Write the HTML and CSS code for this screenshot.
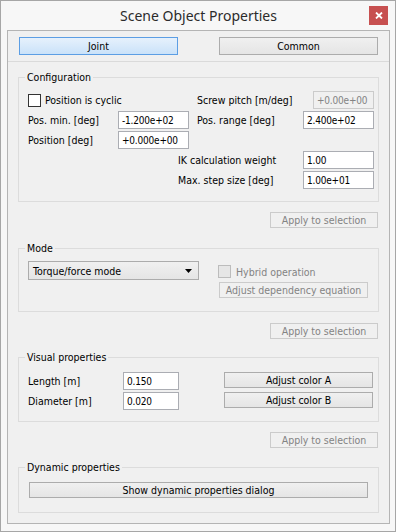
FILE: index.html
```html
<!DOCTYPE html>
<html lang="en">
<head>
    <meta charset="UTF-8">
    <title>Scene Object Properties</title>
    <link rel="stylesheet" href="styles.css">
</head>
<body>
    <div class="window">
        <div class="titlebar">
            <span class="title">Scene Object Properties</span>
            <span class="close">
                <svg width="8" height="7" viewBox="0 0 8 7"><path d="M1 0.5 L7 6.5 M7 0.5 L1 6.5" stroke="#fff" stroke-width="1.8"/></svg>
            </span>
        </div>

        <div class="client">
            <div class="tabs">
                <button class="btn tab active">Joint</button>
                <button class="btn tab">Common</button>
            </div>

            <div class="page">
                <fieldset class="group config">
                    <legend>Configuration</legend>
                    <div class="row first">
                        <span class="check"><span class="box"></span>Position is cyclic</span>
                        <span class="lbl-pitch">Screw pitch [m/deg]</span>
                        <input class="field w61" type="text" value="+0.00e+00" disabled>
                    </div>
                    <div class="row">
                        <span class="lbl-a">Pos. min. [deg]</span>
                        <input class="field w71" type="text" value="-1.200e+02">
                        <span class="lbl-b">Pos. range [deg]</span>
                        <input class="field w71" type="text" value="2.400e+02">
                    </div>
                    <div class="row">
                        <span class="lbl-a">Position [deg]</span>
                        <input class="field w71" type="text" value="+0.000e+00">
                    </div>
                    <div class="row">
                        <span class="lbl-ik">IK calculation weight</span>
                        <input class="field w71" type="text" value="1.00">
                    </div>
                    <div class="row">
                        <span class="lbl-ik">Max. step size [deg]</span>
                        <input class="field w71" type="text" value="1.00e+01">
                    </div>
                </fieldset>

                <div class="apply-row first-apply">
                    <button class="btn apply" disabled>Apply to selection</button>
                </div>

                <fieldset class="group mode">
                    <legend>Mode</legend>
                    <div class="mode-body">
                        <div class="combo">
                            <span>Torque/force mode</span>
                            <svg width="7" height="4" viewBox="0 0 7 4"><polygon points="0,0 7,0 3.5,4" fill="#000"/></svg>
                        </div>
                        <div class="mode-side">
                            <span class="check disabled"><span class="box"></span>Hybrid operation</span>
                            <button class="btn dep" disabled>Adjust dependency equation</button>
                        </div>
                    </div>
                </fieldset>

                <div class="apply-row second-apply">
                    <button class="btn apply" disabled>Apply to selection</button>
                </div>

                <fieldset class="group visual">
                    <legend>Visual properties</legend>
                    <div class="row first">
                        <span class="lbl-v">Length [m]</span>
                        <input class="field w56" type="text" value="0.150">
                        <button class="btn color">Adjust color A</button>
                    </div>
                    <div class="row">
                        <span class="lbl-v">Diameter [m]</span>
                        <input class="field w56" type="text" value="0.020">
                        <button class="btn color">Adjust color B</button>
                    </div>
                </fieldset>

                <div class="apply-row third-apply">
                    <button class="btn apply" disabled>Apply to selection</button>
                </div>

                <fieldset class="group dynamic">
                    <legend>Dynamic properties</legend>
                    <button class="btn wide">Show dynamic properties dialog</button>
                </fieldset>
            </div>
        </div>
    </div>
</body>
</html>
```

FILE: styles.css
```css
body {
    margin: 0;
    font-family: "DejaVu Sans Condensed", "Liberation Sans", sans-serif;
    font-size: 10.5px;
    color: #000;
    background-color: #fff;
}

.window {
    box-sizing: border-box;
    width: 396px;
    height: 532px;
    border: 1px solid #a6a6a6;
    background-color: #f7f7f7;
    padding: 0 5px 7px 6px;
    display: flex;
    flex-direction: column;
}

.titlebar {
    height: 29px;
    display: flex;
    align-items: center;
    justify-content: center;
    position: relative;
}

.title {
    font-family: "Noto Sans", sans-serif;
    font-size: 14px;
    color: #2b2b2b;
    margin-top: -1px;
}

.close {
    position: absolute;
    right: 2px;
    top: 5px;
    width: 19px;
    height: 19px;
    background-color: #c75050;
    display: flex;
    align-items: center;
    justify-content: center;
}

.client {
    flex: 1;
    border: 1px solid #b4b4b4;
    background-color: #f0f0f0;
}

.tabs {
    box-sizing: border-box;
    height: 31px;
    border-bottom: 1px solid #dadada;
    padding: 6px 11px 0 11px;
    display: flex;
    justify-content: space-between;
    align-items: flex-start;
}

.page {
    padding: 0 10px;
}

/* buttons */
.btn {
    box-sizing: border-box;
    font-family: inherit;
    font-size: 10.5px;
    color: #000;
    border: 1px solid #acacac;
    background: linear-gradient(#f0f0f0, #e5e5e5);
    padding: 0;
    margin: 0;
    height: 16px;
    line-height: 14px;
    border-radius: 0;
}

.btn:disabled {
    color: #838383;
    border-color: #cbcbcb;
    background: #f0f0f0;
}

.tab {
    width: 159px;
    height: 18px;
}

.tab.active {
    border-color: #5c9ee4;
    background: linear-gradient(#e6f1fc, #cae2f9);
}

.apply-row {
    display: flex;
    justify-content: flex-end;
    padding-right: 1px;
}

.apply {
    width: 108px;
}

.first-apply { margin-top: 10px; }
.second-apply { margin-top: 11px; }
.third-apply { margin-top: 10px; }

/* group boxes */
.group {
    margin: 0;
    border: 1px solid #dcdcdc;
    padding: 0 9px;
    min-width: 0;
}

.group legend {
    padding: 0 2px;
    margin-left: -3px;
    height: 15px;
    line-height: 15px;
}

.config {
    margin-top: 8px;
    padding-top: 6px;
    padding-bottom: 12px;
}

.mode {
    margin-top: 13px;
    padding-top: 5px;
    padding-bottom: 13px;
}

.visual {
    margin-top: 11px;
    padding-top: 7px;
    padding-bottom: 11px;
}

.dynamic {
    margin-top: 12px;
    padding-top: 7px;
    padding-bottom: 14px;
}

.row {
    display: flex;
    align-items: center;
    height: 18px;
    margin-top: 2px;
}

.row > * {
    flex-shrink: 0;
}

.row.first {
    margin-top: 0;
}

.field {
    box-sizing: border-box;
    height: 18px;
    border: 1px solid #abadb3;
    background-color: #fff;
    font-family: inherit;
    font-size: 10px;
    letter-spacing: -0.2px;
    color: #000;
    padding: 0 2px 0 3px;
    margin: 0;
    outline: none;
}

.field:disabled {
    border-color: #cbcbcb;
    background-color: #f0f0f0;
    color: #838383;
}

.w61 { width: 61px; }
.w71 { width: 71px; }
.w56 { width: 56px; }

.check {
    display: flex;
    align-items: center;
    width: 169px;
}

.check .box {
    box-sizing: border-box;
    width: 13px;
    height: 13px;
    border: 1px solid #333;
    background-color: #fff;
    margin-right: 4px;
}

.check.disabled {
    color: #838383;
}

.check.disabled .box {
    border-color: #bcbcbc;
    background-color: #e6e6e6;
}

.lbl-pitch { width: 116px; }
.lbl-a { width: 90px; }
.lbl-b { width: 106px; margin-left: 8px; }
.lbl-ik { width: 125px; margin-left: 150px; }
.lbl-v { width: 95px; }

/* mode */
.mode-body {
    display: flex;
    align-items: flex-start;
}

.combo {
    box-sizing: border-box;
    flex-shrink: 0;
    width: 171px;
    height: 19px;
    border: 1px solid #acacac;
    background: linear-gradient(#f0f0f0, #e5e5e5);
    display: flex;
    align-items: center;
    justify-content: space-between;
    padding: 0 6px 0 4px;
}

.mode-side {
    margin-left: 19px;
    display: flex;
    flex-direction: column;
    align-items: flex-start;
}

.mode-side .check {
    width: auto;
    height: 21px;
}

.mode-side .check .box {
    margin-right: 5px;
}

.dep {
    width: 149px;
    margin-left: 1px;
}

/* visual */
.color {
    width: 149px;
    margin-left: 45px;
    align-self: flex-start;
}

.wide {
    width: 339px;
    margin-left: 1px;
    display: block;
}
```
